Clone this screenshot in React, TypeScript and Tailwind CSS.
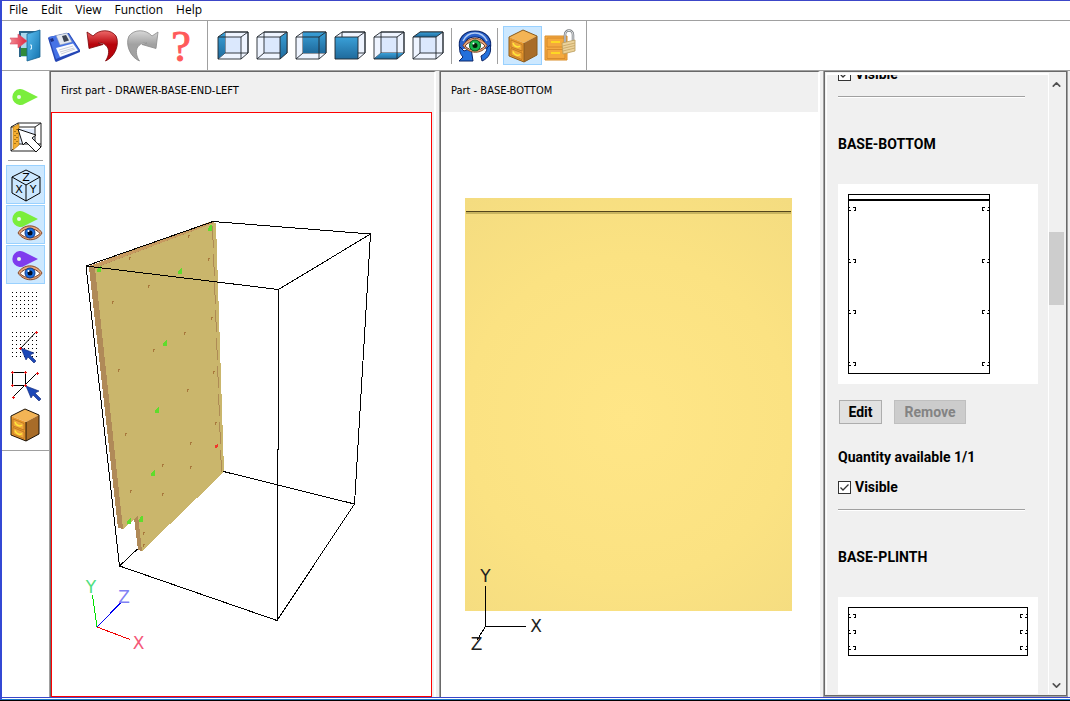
import type { ReactNode } from "react";
import { ChevronDown, ChevronUp } from "lucide-react";
import clsx from "clsx";

const MENU = ["File", "Edit", "View", "Function", "Help"];

type Face = "left" | "right" | "back" | "front" | "bottom" | "top";

const FACES: { face: Face; points: string }[] = [
  { face: "left", points: "1,7 8,2 8,23 1,29" },
  { face: "right", points: "24,7 31,2 31,23 24,29" },
  { face: "back", points: "8,2 31,2 31,23 8,23" },
  { face: "front", points: "1,7 24,7 24,29 1,29" },
  { face: "bottom", points: "1,29 8,23 31,23 24,29" },
  { face: "top", points: "1,7 8,2 31,2 24,7" },
];

function Icon({ children }: { children: ReactNode }) {
  return (
    <svg viewBox="0 0 32 32" className="h-8 w-8 shrink-0 overflow-visible" aria-hidden="true">
      {children}
    </svg>
  );
}

function ExitIcon() {
  return (
    <Icon>
      <defs>
        <linearGradient id="door" x1="0" y1="0" x2="1" y2="1">
          <stop offset="0" stopColor="#5cc0f2" />
          <stop offset="1" stopColor="#1272ae" />
        </linearGradient>
        <linearGradient id="exitArrow" x1="0" y1="0" x2="1" y2="0">
          <stop offset="0" stopColor="#f48a92" />
          <stop offset="1" stopColor="#dc2440" />
        </linearGradient>
      </defs>
      <path d="M10 1H31V27H29V3H12V27H10Z" fill="#2a6488" />
      <path d="M12 3H19V27H12Z" fill="#a9d8ee" />
      <path d="M12 18H18V26H12Z" fill="#2f8a3c" />
      <path d="M18 4L31 0V27L18 31Z" fill="url(#door)" stroke="#176290" strokeWidth="0.8" />
      <path d="M21 15h1.5v4H21" fill="none" stroke="#d9f2ff" />
      <path d="M1 8H9V4L18 11L9 18V14H1L3 11Z" fill="url(#exitArrow)" stroke="#d9536a" strokeWidth="0.6" />
    </Icon>
  );
}

function SaveIcon() {
  return (
    <Icon>
      <path d="M0 8L7 31L8 32L32 22V20L21 3H19L1 7Z" fill="#2546b4" />
      <path d="M1 7L20 3L31 20L8 29Z" fill="#4673e6" />
      <path d="M8 5.500L19 3L24 12L12 15Z" fill="#e3e8f0" stroke="#8090b0" strokeWidth="0.5" />
      <path d="M14 6L18 5L21 10.500L16 12Z" fill="#3c4454" />
      <path d="M8 18L25 13.500L30 20.500L12 27Z" fill="#fbfcff" />
      <path d="M11 20l14-4M12 22l14-4M13 24l14-5" stroke="#b4bac8" strokeWidth="0.7" />
      <path d="M2 9l3-1 1 3-3 1z" fill="#1b2f85" />
    </Icon>
  );
}

function TurnArrow({ id, from, to, edge, flip }: { id: string; from: string; to: string; edge: string; flip?: boolean }) {
  return (
    <Icon>
      <defs>
        <linearGradient id={id} x1="0" y1="0" x2="0" y2="1">
          <stop offset="0" stopColor={from} />
          <stop offset="0.45" stopColor={to} />
          <stop offset="1" stopColor={to} />
        </linearGradient>
      </defs>
      <path
        d="M0 2L6 6C12 -1 24 -1 29 6C33 14 28 27 18.500 31C22 26 23 19 19 15.500C17 13.500 14 12.500 11 13L16 14.500L2 18.500Z"
        fill={`url(#${id})`}
        stroke={edge}
        strokeWidth="0.8"
        transform={flip ? "translate(32 0) scale(-1 1)" : undefined}
      />
    </Icon>
  );
}

function HelpIcon() {
  return (
    <Icon>
      <text
        x="16"
        y="31"
        textAnchor="middle"
        fill="#ff5a5a"
        stroke="#ff5a5a"
        className="font-['Liberation_Serif',serif] text-[44px]"
      >
        ?
      </text>
    </Icon>
  );
}

function CubeIcon({ points }: { points: string }) {
  return (
    <Icon>
      <defs>
        <linearGradient id="cubeFill" x1="0" y1="0" x2="0" y2="1">
          <stop offset="0" stopColor="#3aa0d8" />
          <stop offset="1" stopColor="#1f6a9c" />
        </linearGradient>
      </defs>
      <path d="M1 7L8 2H31V23L24 29H1Z" fill="#eef4ff" />
      <path d="M8 7H24V23H8Z" fill="#dbe8fd" />
      <path d="M8 2H31V23H8ZM1 29L8 23" fill="none" stroke="#20262c" strokeWidth="0.9" />
      <polygon points={points} fill="url(#cubeFill)" />
      <path d="M1 7H24V29H1ZM1 7L8 2H31V23L24 29M24 7L31 2" fill="none" stroke="#20262c" strokeWidth="0.9" />
    </Icon>
  );
}

function EyeShape() {
  return (
    <>
      <path d="M-12 0C-7 -9 6 -10 12 0C7 9 -6 9 -12 0Z" fill="#e9a87c" stroke="#7a3c1c" strokeWidth="0.9" />
      <path d="M-10 0.500C-5 -6 5 -6 10 0.500C5 6 -5 6 -10 0.500Z" fill="#fff" stroke="#502010" strokeWidth="0.8" />
    </>
  );
}

function RotateViewIcon() {
  return (
    <Icon>
      <path d="M4 19C1 10 7 4 16 4C25 4 31 10 28 19" fill="none" stroke="#0a2468" strokeWidth="7" />
      <path d="M4 19C1 10 7 4 16 4C25 4 31 10 28 19" fill="none" stroke="#2a62cc" strokeWidth="5" />
      <path d="M4 11C7 5 11 3 16 3C21 3 25 5 28 11" fill="none" stroke="#b4cdf4" strokeWidth="1.500" />
      <path d="M1 17L5 21L12 18L14 31H0L4 27C1 24 0 20 1 17Z" fill="#2370dc" stroke="#0a2468" />
      <path d="M31 15C33 22 30 28 23 31L22 26C26 24 28 21 28 18Z" fill="#2370dc" stroke="#0a2468" />
      <g transform="translate(16 15.5)">
        <EyeShape />
        <circle r="5.500" fill="#19b34a" stroke="#075c20" />
        <circle r="2.500" fill="#041c08" />
        <circle cx="-1.500" cy="-2" r="1" fill="#fff" />
      </g>
    </Icon>
  );
}

function CabinetIcon({ outline = "#8a5a1c", shift = 0 }: { outline?: string; shift?: number }) {
  return (
    <Icon>
      <g transform={`translate(${shift} 0)`}>
        <path d="M3 7L17 0L31 6L18 13Z" fill="#f3b455" />
        <path d="M3 7L18 13V32L3 26Z" fill="#e9982e" />
        <path d="M18 13L31 6V25L18 32Z" fill="#a86c28" />
        <path d="M5 10L16 14.500V21L5 17ZM5 18.500L16 23V29.500L5 25Z" fill="#f0a63c" stroke="#b8741e" strokeWidth="0.8" />
        <path d="M7 13C8 16.500 12 18 14 16M7 21.500C8 25 12 26.500 14 24.500" fill="none" stroke="#ffe93a" strokeWidth="1.500" />
        <path d="M3 7L17 0L31 6V25L18 32L3 26ZM18 13V32" fill="none" stroke={outline} strokeWidth="1" />
      </g>
    </Icon>
  );
}

function LockedPartsIcon() {
  return (
    <Icon>
      <path d="M0 6H22V30H0Z" fill="#f5ab42" stroke="#d98e2a" />
      <path d="M2 8H20V17H2ZM2 19.500H20V28.500H2Z" fill="#f4a93e" stroke="#d08428" strokeWidth="0.8" />
      <path d="M6 12H15M6 23H15" stroke="#ffe81c" strokeWidth="1.500" />
      <path d="M20 13V5C20 -1 28 -1 28 5V12" fill="none" stroke="#787c80" strokeWidth="2.500" />
      <path d="M20 13V5C20 -1 28 -1 28 5V12" fill="none" stroke="#e4e6e8" strokeWidth="1" />
      <path d="M17 13L30 10V21L18 24Z" fill="#ecd29a" stroke="#b99b58" strokeWidth="0.8" />
      <path d="M17.500 16L30 13M17.500 18.500L30 15.500M18 21L30 18" stroke="#c8a868" strokeWidth="0.9" />
    </Icon>
  );
}

function Drop({ y, color }: { y: number; color: string }) {
  return (
    <g transform={`translate(9 ${y})`}>
      <path d="M19 0L6 6.500A8 8 0 1 1 6 -6.500Z" fill={color} />
      <circle r="2" fill="#e8f8e8" />
    </g>
  );
}

function DropEyeIcon({ color }: { color: string }) {
  return (
    <Icon>
      <Drop y={10} color={color} />
      <g transform="translate(20 24)">
        <EyeShape />
        <circle r="5" fill="#1c6fe0" stroke="#0b3a90" />
        <circle r="2.500" fill="#020a20" />
        <circle cx="-1.500" cy="-2" r="1" fill="#fff" />
      </g>
    </Icon>
  );
}

function PickFaceIcon() {
  return (
    <Icon>
      <path d="M8 8H25V23H8Z" fill="#e2edff" />
      <path d="M1 6L8 2H31V26L25 30H1ZM8 2V23M1 6H25V30M25 6L31 2M8 23H31M1 30L8 23" fill="none" stroke="#222" />
      <path d="M3 6L9 3V24L3 29Z" fill="#f5ae30" stroke="#a8700c" strokeWidth="0.6" />
      <path d="M5 10v16M7 8v16" stroke="#5c3c00" strokeWidth="1" strokeDasharray="1 3" />
      <path d="M8 8L13 24L16 21L26 31L31 26L22 17L26 14Z" fill="#fff" stroke="#111" strokeWidth="1" />
    </Icon>
  );
}

function AxesCubeIcon() {
  return (
    <Icon>
      <path d="M16 1L30 8V24L16 32L2 24V8ZM2 8L16 16L30 8M16 16V32" fill="none" stroke="#000" strokeWidth="1" />
      <g fontSize="11" fontFamily="DejaVu Sans, sans-serif" textAnchor="middle">
        <text x="16" y="12">Z</text>
        <text x="9" y="24">X</text>
        <text x="23" y="24">Y</text>
      </g>
    </Icon>
  );
}

const STEPS = [0, 1, 2, 3, 4, 5, 6];

function DotGrid() {
  return (
    <g fill="#000" shapeRendering="crispEdges">
      {STEPS.map((row) =>
        STEPS.map((col) => <rect key={`${row}-${col}`} x={2 + col * 4} y={3 + row * 4} width="1" height="1" />),
      )}
    </g>
  );
}

function BlueCursor({ x, y }: { x: number; y: number }) {
  return (
    <path
      transform={`translate(${x} ${y})`}
      d="M0 0L13 5L9 7L15 13L13 15L7 9L5 12Z"
      fill="#1c48b8"
      stroke="#0a2070"
      strokeWidth="0.6"
    />
  );
}

function RedPoints({ points }: { points: number[][] }) {
  return (
    <>
      {points.map(([x, y]) => (
        <path key={`${x}-${y}`} d={`M${x - 1.5} ${y}h3M${x} ${y - 1.5}v3`} stroke="#e01010" />
      ))}
    </>
  );
}

function GridIcon() {
  return (
    <Icon>
      <DotGrid />
    </Icon>
  );
}

function GridSnapIcon() {
  return (
    <Icon>
      <DotGrid />
      <path d="M11 19L26 3" stroke="#000" />
      <BlueCursor x={11} y={19} />
      <RedPoints points={[[26.5, 3.5], [10.5, 19.5]]} />
    </Icon>
  );
}

function VertexSnapIcon() {
  return (
    <Icon>
      <path d="M2.500 3.500H15.500V16.500H2.500ZM3 28L27 4" fill="none" stroke="#000" />
      <BlueCursor x={16} y={17} />
      <RedPoints points={[[2.5, 3.5], [15.5, 3.5], [2.5, 16.5], [15.5, 16.5], [3.5, 28.5], [27.5, 4.5]]} />
    </Icon>
  );
}

type ToolButtonProps = { label: string; active?: boolean; side?: boolean; children: ReactNode };

function ToolButton({ label, active, side, children }: ToolButtonProps) {
  return (
    <button
      type="button"
      aria-label={label}
      aria-pressed={active}
      className={clsx(
        "flex h-[39px] w-[39px] shrink-0 items-start border pt-[3px]",
        side ? "pl-[3px]" : "pl-0.5",
        active ? "border-[#99d1ff] bg-[#cce8ff]" : "border-transparent",
      )}
    >
      {children}
    </button>
  );
}

function MainToolbar() {
  return (
    <div className="flex h-[49px] items-center bg-white pl-1">
      <ToolButton label="Exit"><ExitIcon /></ToolButton>
      <ToolButton label="Save"><SaveIcon /></ToolButton>
      <ToolButton label="Undo"><TurnArrow id="undo" from="#ee6a6a" to="#b8040c" edge="#7a0408" /></ToolButton>
      <ToolButton label="Redo"><TurnArrow id="redo" from="#d8d8d8" to="#a2a2a2" edge="#8a8a8a" flip /></ToolButton>
      <ToolButton label="Help"><HelpIcon /></ToolButton>
      <div className="mx-1.5 w-px self-stretch bg-[#a0a0a0]" />
      {FACES.map(({ face, points }) => (
        <ToolButton key={face} label={`View ${face}`}>
          <CubeIcon points={points} />
        </ToolButton>
      ))}
      <div className="mr-1 ml-[3px] h-9 w-px bg-[#a0a0a0]" />
      <ToolButton label="Rotate view"><RotateViewIcon /></ToolButton>
      <div className="mr-[5px] ml-0.5 h-9 w-px bg-[#a0a0a0]" />
      <ToolButton label="Show parts" active><CabinetIcon /></ToolButton>
      <ToolButton label="Lock parts"><LockedPartsIcon /></ToolButton>
      <div className="ml-[5px] w-px self-stretch bg-[#a0a0a0]" />
    </div>
  );
}

function SideToolbar() {
  return (
    <div className="w-[47px] shrink-0 bg-white">
      <div className="flex flex-col gap-px border-b border-[#a0a0a0] px-1 py-1.5">
        <ToolButton side label="Origin"><Icon><Drop y={16} color="#7aee3c" /></Icon></ToolButton>
        <ToolButton side label="Pick face"><PickFaceIcon /></ToolButton>
        <div className="mx-0.5 my-[3px] h-px bg-[#a0a0a0]" />
        <ToolButton side label="Axes" active><AxesCubeIcon /></ToolButton>
        <ToolButton side label="Show first markers" active><DropEyeIcon color="#7aee3c" /></ToolButton>
        <ToolButton side label="Show second markers" active><DropEyeIcon color="#7f3cee" /></ToolButton>
        <ToolButton side label="Grid"><GridIcon /></ToolButton>
        <ToolButton side label="Snap to grid"><GridSnapIcon /></ToolButton>
        <ToolButton side label="Snap to vertex"><VertexSnapIcon /></ToolButton>
        <ToolButton side label="Part"><CabinetIcon outline="#1c1206" shift={-2} /></ToolButton>
      </div>
    </div>
  );
}

function Pane({ title, children }: { title: string; children: ReactNode }) {
  return (
    <section className="mr-[3px] flex min-w-0 border-l border-[#a0a0a0]">
      <div className="flex min-w-0 flex-1 flex-col border-t border-r-2 border-l border-t-[#696969] border-r-white border-l-[#696969]">
        <h2 className="flex h-10 shrink-0 items-center px-2.5 pb-0.5 font-['DejaVu_Sans_Condensed','DejaVu_Sans',sans-serif] text-[11px] font-normal whitespace-nowrap">
          {title}
        </h2>
        {children}
      </div>
    </section>
  );
}

const DRILL_HOLES = [
  [188, 235], [128.5, 257], [148, 285], [111.5, 301], [208, 258], [210.5, 317], [183.5, 332], [153, 349],
  [118, 369], [213, 371], [187, 389], [215, 422], [124.5, 433], [190, 442], [190, 466], [162, 464],
  [130, 490], [161.5, 493], [142.5, 532], [143, 544],
];

const MARKERS = [
  [99, 269], [180, 271], [209.5, 228], [165, 343], [157, 410], [153, 473], [129, 521], [140.5, 519],
];

function FirstPartView() {
  return (
    <div className="min-h-0 flex-1 pr-0.5">
      <div className="h-full border border-[#ff0000] bg-white">
        <svg viewBox="52 113 379 583" className="block h-full w-full" shapeRendering="crispEdges">
          <polygon points="89,267 212,222 216,223 224,472 142,551 138,550 134,518 123,529 118,528" fill="#b08a58" />
          <polygon points="95,268 214,223 216,223 224,472 142,551 138,516 123,529" fill="#cab66c" />
          <polygon points="89,266 212,221 214,223 94,268" fill="#c79a60" />
          <path d="M212.500 226L221.500 473" stroke="#ae8b55" strokeDasharray="22 6" />
          {DRILL_HOLES.map(([x, y]) => (
            <path key={`${x}-${y}`} d={`M${x} ${y}h2v1h-1v2h-1z`} fill="#a8783c" />
          ))}
          {MARKERS.map(([x, y]) => (
            <path key={`${x}-${y}`} d={`M${x - 2} ${y + 1}l3 -4h1v6h-4z`} fill="#5fdc2c" />
          ))}
          <path d="M215 448v-3l3-1v2l-2 3z" fill="#f0382c" />
          <path
            d="M86 266L213 221.500L370.500 234L278.500 289.500ZM86 266L119.500 566L277 620.500L354.500 504L370.500 234M278.500 289.500L277.500 620.500M223.500 471.500L354.500 504M119.500 566L137.500 549"
            fill="none"
            stroke="#000"
          />
          <path d="M97 627L92.500 595" stroke="#00e000" />
          <path d="M97 627L120.500 603" stroke="#0000f0" />
          <path d="M97 627L130 639.500" stroke="#f00000" />
          <g fontFamily="DejaVu Sans, sans-serif" fontSize="17" textAnchor="middle">
            <text x="91" y="593" fill="#50e080">Y</text>
            <text x="124" y="603" fill="#8080f4">Z</text>
            <text x="138.500" y="649" fill="#f45878">X</text>
          </g>
        </svg>
      </div>
    </div>
  );
}

function PartView() {
  return (
    <div className="min-h-0 flex-1 bg-white">
      <svg viewBox="441 112 377 585" className="block h-full w-full">
        <defs>
          <radialGradient id="board" gradientUnits="userSpaceOnUse" cx="628" cy="418" r="270">
            <stop offset="0" stopColor="#ffe687" />
            <stop offset="0.6" stopColor="#fbe282" />
            <stop offset="1" stopColor="#f4dc80" />
          </radialGradient>
        </defs>
        <rect x="465" y="198" width="327" height="413" fill="url(#board)" />
        <rect x="466" y="211" width="325" height="1" fill="#54461c" />
        <rect x="466" y="212" width="325" height="2" fill="#c8b460" />
        <path d="M485.500 586V626.500H526M485.500 626.500L477 640" fill="none" stroke="#000" shapeRendering="crispEdges" />
        <g fontFamily="DejaVu Sans, sans-serif" fontSize="17" textAnchor="middle" fill="#222">
          <text x="485.500" y="582">Y</text>
          <text x="536" y="632">X</text>
          <text x="476.500" y="650">Z</text>
        </g>
      </svg>
    </div>
  );
}

function Fitting({ x, y, flip }: { x: number; y: number; flip?: boolean }) {
  return (
    <path
      transform={`translate(${x} ${y})${flip ? " scale(-1 1)" : ""}`}
      d="M1 -1H2M1 2H3M5 -1H7.500V2H6"
      fill="none"
      stroke="#000"
    />
  );
}

function BottomDrawing() {
  return (
    <svg viewBox="0 0 200 200" className="h-[200px] w-[200px] bg-white" shapeRendering="crispEdges">
      <rect x="10.500" y="10.500" width="141" height="179" fill="none" stroke="#000" />
      <rect x="10" y="15" width="142" height="2" />
      {[24.5, 76.5, 127.5, 179.5].map((y) => (
        <g key={y}>
          <Fitting x={10} y={y} />
          <Fitting x={152} y={y} flip />
        </g>
      ))}
    </svg>
  );
}

function PlinthDrawing() {
  return (
    <svg viewBox="0 0 200 200" className="h-[200px] w-[200px] bg-white" shapeRendering="crispEdges">
      <rect x="10.500" y="10.500" width="179" height="48" fill="none" stroke="#000" />
      {[18.5, 34.5, 50.5].map((y) => (
        <g key={y}>
          <Fitting x={10} y={y} />
          <Fitting x={190} y={y} flip />
        </g>
      ))}
    </svg>
  );
}

function VisibleRow() {
  return (
    <>
      <label className="flex h-4 items-center gap-1">
        <span className="relative flex h-[13px] w-[13px]">
          <input
            type="checkbox"
            defaultChecked
            className="peer h-[13px] w-[13px] appearance-none border border-[#333] bg-white"
          />
          <svg
            viewBox="0 0 13 13"
            className="pointer-events-none absolute inset-0 hidden peer-checked:block"
            fill="none"
            stroke="#333"
            strokeWidth="1.300"
          >
            <path d="M2.500 6.500L5 9L10.500 3.500" />
          </svg>
        </span>
        Visible
      </label>
      <hr className="mt-3.5 mr-6 border-t border-b border-t-[#a0a0a0] border-b-white" />
    </>
  );
}

function PartHeader({ name, drawing }: { name: string; drawing: ReactNode }) {
  return (
    <>
      <h3 className="mt-9 h-5 leading-5">{name}</h3>
      <div className="mt-[30px]">{drawing}</div>
    </>
  );
}

function PartActions({ quantity }: { quantity: string }) {
  return (
    <>
      <div className="mt-4 flex gap-3 pl-px">
        <button type="button" className="h-6 w-[43px] border border-[#adadad] bg-[#e1e1e1]">
          Edit
        </button>
        <button type="button" disabled className="h-6 w-[72px] border border-[#bfbfbf] bg-[#cccccc] text-[#838383]">
          Remove
        </button>
      </div>
      <p className="mt-[23px] mb-3 h-5 leading-5">Quantity available {quantity}</p>
      <VisibleRow />
    </>
  );
}

function PartsSidebar() {
  return (
    <aside className="mr-0.5 flex w-[245px] shrink-0 border-r border-b border-l border-[#a0a0a0]">
      <div className="flex min-w-0 flex-1 border border-[#696969] p-px">
        <div className="min-w-0 flex-1 overflow-hidden border-t-2 border-l border-white pl-[11px] font-['Roboto',sans-serif] text-sm font-bold">
          <div className="-mt-[9px] w-[211px]">
            <VisibleRow />
            <PartHeader name="BASE-BOTTOM" drawing={<BottomDrawing />} />
            <PartActions quantity="1/1" />
            <PartHeader name="BASE-PLINTH" drawing={<PlinthDrawing />} />
          </div>
        </div>
        <div className="flex w-[17px] flex-col items-center border-l border-white pr-px">
          <button type="button" aria-label="Scroll up" className="flex h-[22px] items-center justify-center">
            <ChevronUp size={13} strokeWidth={3} color="#505050" />
          </button>
          <div className="flex-[137]" />
          <div className="w-full flex-[73] bg-[#cdcdcd]" />
          <div className="flex-[371]" />
          <button type="button" aria-label="Scroll down" className="flex h-[17px] items-center justify-center">
            <ChevronDown size={13} strokeWidth={3} color="#505050" />
          </button>
        </div>
      </div>
    </aside>
  );
}

export default function App() {
  return (
    <div className="flex h-screen flex-col overflow-hidden border-b border-black bg-[#f0f0f0] text-black">
      <div className="flex min-h-0 flex-1 flex-col border-t border-b border-l-2 border-t-[#3c46c8] border-b-[#1979ca] border-l-[#3448d4]">
        <nav className="flex h-5 shrink-0 items-center gap-[13px] border-b border-[#a0a0a0] bg-white pb-px pl-[7px] font-['Open_Sans','Noto_Sans',sans-serif] text-xs">
          {MENU.map((item) => (
            <button key={item} type="button">
              {item}
            </button>
          ))}
        </nav>
        <MainToolbar />
        <main className="flex min-h-0 flex-1 border-t border-[#a0a0a0]">
          <SideToolbar />
          <div className="grid min-w-0 flex-1 grid-cols-[390fr_384fr]">
            <Pane title="First part - DRAWER-BASE-END-LEFT">
              <FirstPartView />
            </Pane>
            <Pane title="Part - BASE-BOTTOM">
              <PartView />
            </Pane>
          </div>
          <PartsSidebar />
        </main>
        <div className="h-0.5 shrink-0 border-t border-[#3c46c8] bg-white" />
      </div>
    </div>
  );
}
